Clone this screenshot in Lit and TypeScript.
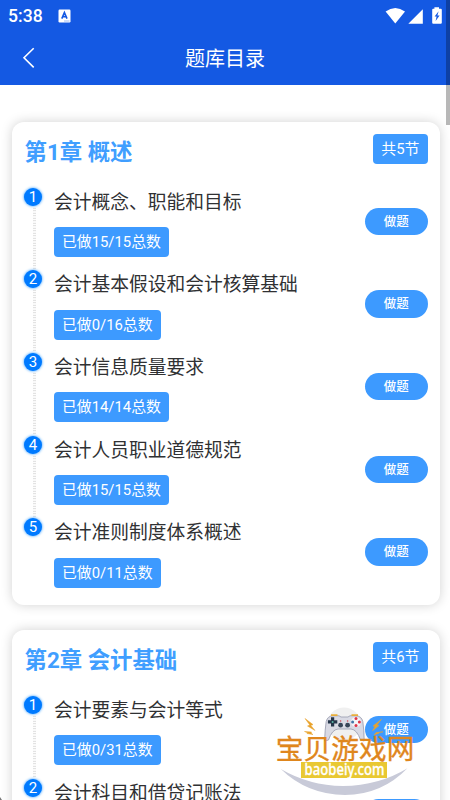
import { LitElement, html, css } from "lit";
import { customElement, property } from "lit/decorators.js";

interface Section { title: string; progress: string; }
interface Chapter { title: string; count: number; sections: Section[]; }

const chapters: Chapter[] = [
  {
    title: "第1章 概述", count: 5, sections: [
      { title: "会计概念、职能和目标", progress: "15/15" },
      { title: "会计基本假设和会计核算基础", progress: "0/16" },
      { title: "会计信息质量要求", progress: "14/14" },
      { title: "会计人员职业道德规范", progress: "15/15" },
      { title: "会计准则制度体系概述", progress: "0/11" },
    ],
  },
  {
    title: "第2章 会计基础", count: 6, sections: [
      { title: "会计要素与会计等式", progress: "0/31" },
      { title: "会计科目和借贷记账法", progress: "0/40" },
    ],
  },
];

@customElement("status-header")
class StatusHeader extends LitElement {
  static styles = css`
    :host { display: flex; flex-direction: column; height: 85px; background: #1459e3; color: #fff; }
    .status { height: 31px; display: flex; align-items: center; padding: 0 8px; }
    .time { font-size: 17.6px; font-weight: 500; line-height: 32px; width: 50px; white-space: nowrap; }
    .spacer { flex: 1; }
    .nav { height: 54px; display: grid; grid-template-columns: 60px 1fr 60px; align-items: center; }
    .back { margin-left: 22px; display: block; }
    .title { text-align: center; font-size: 20px; line-height: 54px; padding-top: 1px; height: 53px; }
    svg { display: block; }
  `;
  render() {
    return html`
      <div class="status">
        <span class="time">5:38</span>
        <svg width="13" height="14" viewBox="0 0 13 14">
          <rect x=".5" y=".5" width="12" height="13" rx="1.2" fill="#fff"/>
          <path d="M3.8 9.6 6.4 3.6 9 9.6M4.8 7.7h3.3" fill="none" stroke="#1459e3" stroke-width="1.6"/>
          <path d="M6 12h5.5" stroke="#9bb9f4"/>
        </svg>
        <span class="spacer"></span>
        <svg width="57" height="18" viewBox="385 6 57 18" fill="#fff">
          <path d="M385.6 10.6Q395.3 3.6 405 10.6L395.3 22.5Z"/>
          <path d="M408.3 22.8 422.8 8.2V22.8Z"/>
          <path d="M434.4 6.2h4.6v1.6h1.8q1 0 1 1V21.8q0 1-1 1h-7.6q-1 0-1-1V8.8q0-1 1-1h1.2Z"/>
          <path d="M438.6 10.2 434.6 15.4h2l-1 4.6 4-5.4h-2.2Z" fill="#1459e3"/>
        </svg>
      </div>
      <div class="nav">
        <svg class="back" width="14" height="22" viewBox="0 0 14 22">
          <path d="M11.7 1.3 2 10.8 11.7 20.4" fill="none" stroke="#fff" stroke-width="1.6"/>
        </svg>
        <div class="title">题库目录</div>
        <span></span>
      </div>`;
  }
}

@customElement("chapter-card")
class ChapterCard extends LitElement {
  @property({ attribute: false }) chapter!: Chapter;
  static styles = css`
    :host { display: block; box-sizing: border-box; margin: 0 10px 25px 12px; padding: 11.5px 12.5px 5px; border-radius: 12px; background: #fff; box-shadow: 0 0 12px rgba(0,0,0,.18); }
    .head { display: flex; justify-content: space-between; height: 53.5px; }
    .name { font-size: 22.4px; font-weight: 700; line-height: 37px; color: #409eff; }
    .tag { box-sizing: border-box; height: 30px; line-height: 30px; padding: 0 8px; border-radius: 4px; background: #3d9aff; color: #fff; font-size: 14.9px; white-space: nowrap; }
    .row { display: grid; grid-template-columns: 29.5px 1fr 62.5px; height: 82.7px; }
    .rail { display: flex; flex-direction: column; align-items: center; width: 18px; margin-left: -.5px; }
    .num { flex: none; width: 18px; height: 18px; margin-top: .5px; border-radius: 50%; background: #007aff; box-shadow: 0 0 3px #1b8fff; color: #fff; font-size: 15px; line-height: 18.5px; text-align: center; }
    .dots { flex: 1; width: 3px; margin: 1px 0 0 2px; background-image: radial-gradient(circle at 50% 50%, #d2d2d2 0, #d8d8d8 .5px, transparent 1px); background-size: 2px 2.5px; }
    .row:last-child .dots { display: none; }
    .title { box-sizing: border-box; height: 40px; padding-top: 1.5px; line-height: 29px; font-size: 18.75px; color: #303133; white-space: nowrap; }
    .done { display: inline-block; height: 30px; line-height: 30px; padding: 0 8px; border-radius: 4px; background: #3d9aff; color: #fff; font-size: 14.85px; white-space: nowrap; }
    .go { margin-top: 20.5px; height: 27.5px; line-height: 27px; border-radius: 14px; background: #3d9aff; color: #fff; font-size: 12.5px; font-weight: 500; text-align: center; }
  `;
  render() {
    return html`
      <div class="head">
        <div class="name">${this.chapter.title}</div>
        <div class="tag">共${this.chapter.count}节</div>
      </div>
      <div>
        ${this.chapter.sections.map((s, i) => html`
          <div class="row">
            <div class="rail"><div class="num">${i + 1}</div><div class="dots"></div></div>
            <div><div class="title">${s.title}</div><div class="done">已做${s.progress}总数</div></div>
            <div class="go">做题</div>
          </div>`)}
      </div>`;
  }
}

@customElement("site-mark")
class SiteMark extends LitElement {
  static styles = css`
    :host { display: block; }
    svg { display: block; }
    .cn { font: 400 27.6px "Noto Sans CJK SC", sans-serif; }
    .url { font: 500 15.8px "Noto Sans", sans-serif; }
  `;
  render() {
    return html`
      <svg width="150" height="100" viewBox="270 700 150 100">
        <circle cx="344" cy="724" r="16.5" fill="#f0f0f0"/>
        <path d="M324.6 741Q325 729 326.2 721.5Q327.5 716 333 715.8H339L341 717H348L350 715.8H356Q361.5 716 362.8 721.5Q364 729 364.2 741L360.5 740Q357 729.5 351 729H338Q332 729.5 328.5 740Z" fill="#d9dae4" stroke="#9fa3b4" stroke-width=".9"/>
        <path d="M331 715.1h6.5M351.5 715.1h6.5" stroke="#e8ae3c" stroke-width="1.8"/>
        <path d="M332.6 717.2v9.4M327.9 721.9h9.4" stroke="#25364a" stroke-width="3.2"/>
        <circle cx="332.6" cy="721.9" r="1" fill="#5ab6a5"/>
        <circle cx="356" cy="722" r="5" fill="#f5f5f8"/>
        <g fill="#df3447"><circle cx="356" cy="718.6" r="1.5"/><circle cx="356" cy="725.4" r="1.5"/><circle cx="359.4" cy="722" r="1.5"/></g>
        <circle cx="352.6" cy="722" r="1.5" fill="#4478a8"/>
        <g fill="#384558"><circle cx="340.6" cy="725.2" r="2.4"/><circle cx="347.6" cy="725.2" r="2.4"/></g>
        <g fill="#cf4450"><circle cx="340.6" cy="721" r=".8"/><circle cx="347.6" cy="721" r=".8"/></g>
        <g fill="#e9a32c" stroke="#e9a32c" stroke-width=".5">
          <path d="M305 718.5 313 724.6 310.8 725.4 315 730.5 307.5 726 309.8 725Z"/>
          <path d="M304.5 731.5 311.5 732 311 733 313 734.6 307 733.5 307.5 732.8Z"/>
          <path d="M381.5 719.2 376.8 725.3 379 725.6 372.5 730.8 375 726.5 373 726Z"/>
          <path d="M383 731.8 378 732.8 379 733.2 374 735 376 732.6Z"/>
        </g>
        <path d="M280.8 769Q309 785.5 343 786Q379 785.5 407.4 768.2Q382 794.6 345 795Q307 794.6 280.8 769Z" fill="#c8cad8"/>
        <rect x="301" y="762" width="86" height="16" fill="#e9c832"/>
        <text class="cn" x="275.8" y="759.3" fill="#df861d" stroke="#df861d" stroke-width=".35" textLength="138.5">宝贝游戏网</text>
        <text class="url" x="304.6" y="775" fill="#fff" stroke="#fff" stroke-width=".3" textLength="80" lengthAdjust="spacingAndGlyphs">baobeiy.com</text>
      </svg>`;
  }
}

@customElement("app-root")
class AppRoot extends LitElement {
  static styles = css`
    :host { display: block; position: relative; width: 450px; height: 800px; overflow: hidden; background: #fff; font-family: Roboto, "Noto Sans CJK SC", sans-serif; }
    .list { padding-top: 37px; }
    .scroll { position: absolute; top: 0; right: 0; width: 4px; height: 125px; background: rgba(0,0,0,.28); }
    .mark { position: absolute; left: 270px; top: 700px; }
    .corner { position: absolute; left: 0; bottom: 0; width: 2px; height: 3px; background: #777; clip-path: polygon(0 0, 100% 100%, 0 100%); }
  `;
  render() {
    return html`
      <status-header></status-header>
      <div class="list">${chapters.map((c) => html`<chapter-card .chapter=${c}></chapter-card>`)}</div>
      <div class="scroll"></div>
      <site-mark class="mark"></site-mark>
      <div class="corner"></div>`;
  }
}
